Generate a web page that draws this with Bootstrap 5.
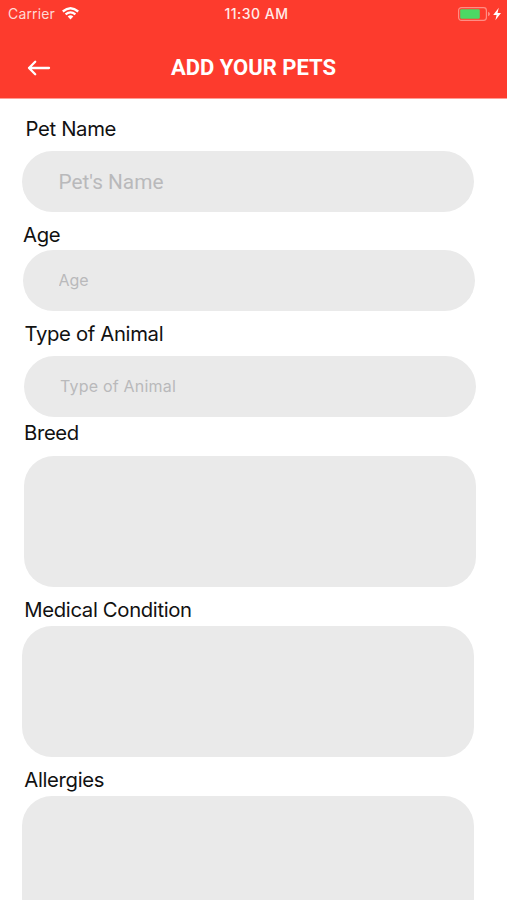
<!DOCTYPE html>
<html lang="en">
<head>
<meta charset="utf-8">
<meta name="viewport" content="width=device-width, initial-scale=1">
<title>Add your pets</title>
<link href="https://cdn.jsdelivr.net/npm/bootstrap@5.3.0/dist/css/bootstrap.min.css" rel="stylesheet">
<style>
body{font-family:Inter,"Liberation Sans",sans-serif;height:900px;overflow:hidden;color:#111}
.app-top{background:#fd3b2d;height:98px;color:#fff;border-bottom:1px solid #ff9d95;box-sizing:content-box}
.status{height:27px;line-height:27px;padding:0 5px 0 8px}
.status-side{width:190px}
.status .carrier{color:#ffd9d5;font-size:14px;letter-spacing:.15px;width:46px;white-space:nowrap}
.clock{font-size:14px;font-weight:500;letter-spacing:.5px;color:#ffebe9;white-space:nowrap;margin-left:3px}
.titlebar{height:71px;padding:11px 27px 0 27px}
.titlebar h1{font:700 22px/30px Roboto,sans-serif;margin:0;white-space:nowrap}
.side{width:24px}
.pet-form label{display:block;font-size:20.3px;letter-spacing:-.34px;line-height:24px;white-space:nowrap}
.field{display:block;width:452px;border:0;background:#eaeaea;height:61px;border-radius:31px;padding:0 36px 1px;resize:none;color:#333}
.field:focus{background:#eaeaea;box-shadow:none}
.field::placeholder{color:#b9b9bb;opacity:1}
.area{height:131px;border-radius:30px}
.g-name{padding:18px 0 0 22px}
.g-name label{margin:0 0 10px 3.5px}
.g-name .field{font-family:Roboto,sans-serif;font-size:20.8px;padding:1px 36.5px 0}
.g-age{padding:11px 0 0 23px}
.g-age label{margin:0 0 3px 0}
.g-age .field,.g-type .field{font-size:16px}
.g-age .field{padding-left:35.5px}
.g-type .field{letter-spacing:.2px}
.g-type{padding:11px 0 0 24px}
.g-type label{margin:0 0 10px .5px}
.g-breed{padding:4px 0 0 24px}
.g-breed label{margin:0 0 11px 0}
.g-med,.g-all{padding:11px 0 0 22px}
.g-med label,.g-all label{margin:0 0 4px 2.3px}
</style>
</head>
<body class="bg-white">
<header class="app-top">
  <div class="status d-flex align-items-center justify-content-between">
    <div class="status-side d-flex align-items-center">
      <span class="carrier">Carrier</span>
      <svg class="ms-2" width="17" height="13" viewBox="0 0 17 13" fill="none" stroke="#fff" stroke-width="2.3"><path d="M.8 4.5Q8.5-2 16.2 4.5M3.6 7.4Q8.5 3.3 13.4 7.4"/><path d="M5.7 9.6Q8.5 7.1 11.3 9.6L8.5 12.5Z" fill="#fff" stroke="none"/></svg>
    </div>
    <span class="clock">11:30 AM</span>
    <div class="status-side d-flex align-items-center justify-content-end">
      <svg width="44" height="14" viewBox="0 0 44 14"><rect x=".6" y=".6" width="27.8" height="12.8" rx="2.8" fill="none" stroke="#ff8d84" stroke-width="1.2"/><rect x="2.2" y="2.2" width="19.6" height="9.6" rx="1.2" fill="#4cd964"/><path d="M30 4.7Q32 5.5 32 7T30 9.3Z" fill="#ff8d84"/><path d="M40.8.8L35.2 8H38.6L37.4 13.2L43 5.9H39.5Z" fill="#fff"/></svg>
    </div>
  </div>
  <div class="titlebar d-flex align-items-center justify-content-between">
    <svg class="side" width="24" height="18" viewBox="0 0 24 18" fill="none" stroke="#fff" stroke-width="2.3" stroke-linecap="round" stroke-linejoin="round"><path d="M22 9H2M8.2 2.8L2 9L8.2 15.2"/></svg>
    <h1>ADD YOUR PETS</h1>
    <span class="side"></span>
  </div>
</header>
<form class="pet-form d-flex flex-column">
  <div class="g-name"><label for="n">Pet Name</label><input id="n" class="form-control field" placeholder="Pet's Name"></div>
  <div class="g-age"><label for="a">Age</label><input id="a" class="form-control field" placeholder="Age"></div>
  <div class="g-type"><label for="t">Type of Animal</label><input id="t" class="form-control field" placeholder="Type of Animal"></div>
  <div class="g-breed"><label for="b">Breed</label><textarea id="b" class="form-control field area"></textarea></div>
  <div class="g-med"><label for="m">Medical Condition</label><textarea id="m" class="form-control field area"></textarea></div>
  <div class="g-all"><label for="l">Allergies</label><textarea id="l" class="form-control field area"></textarea></div>
</form>
<script src="https://cdn.jsdelivr.net/npm/bootstrap@5.3.0/dist/js/bootstrap.bundle.min.js"></script>
</body>
</html>
